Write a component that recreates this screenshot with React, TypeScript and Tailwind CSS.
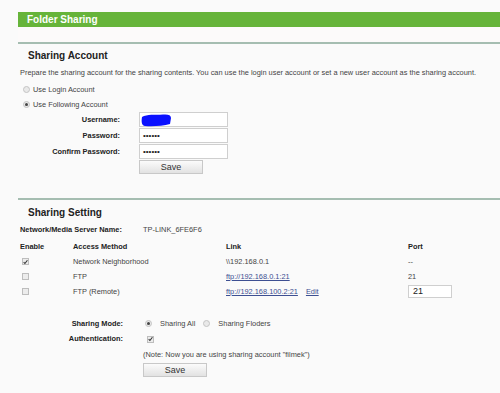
import React from 'react';

function Radio({ checked }: { checked?: boolean }) {
  return (
    <span className="w-[7px] h-[7px] rounded-full border border-[#c4c4c4] bg-[#e9e9e9] flex items-center justify-center shrink-0">
      {checked && <span className="w-[3px] h-[3px] rounded-full bg-[#444]" />}
    </span>
  );
}

function Check({ checked }: { checked?: boolean }) {
  return (
    <span className="w-[7px] h-[7px] border border-[#bdbdbd] bg-[#ececec] flex items-center justify-center shrink-0">
      {checked && (
        <svg width="6" height="6" viewBox="0 0 6 6">
          <path d="M0.8 3.2 L2.3 4.8 L5.3 0.9" stroke="#333" strokeWidth="1.3" fill="none" />
        </svg>
      )}
    </span>
  );
}

function SaveButton() {
  return (
    <button className="w-[64px] h-[14px] border border-[#c8c8c8] bg-gradient-to-b from-[#fbfbfb] to-[#e2e2e2] text-[9px] leading-[12px] text-[#333]">
      Save
    </button>
  );
}

function Field({ label, children }: { label: string; children: React.ReactNode }) {
  return (
    <div className="flex h-[15px] items-center">
      <div className="w-[120px] text-right font-bold text-[#222]">{label}</div>
      <div className="ml-[19px] relative w-[89px] h-[15px] border border-[#cfcfcf] bg-white flex items-center pl-[3px]">
        {children}
      </div>
    </div>
  );
}

export default function App() {
  return (
    <div className="w-[500px] h-[393px] overflow-hidden bg-[#fafafa] pt-[12px] text-[7.4px] leading-none text-[#444]" style={{ fontFamily: '"Liberation Sans", Arial, sans-serif' }}>
      {/* Header bar */}
      <div className="ml-[18px] h-[15px] bg-[#66b43a] pl-[9px] flex items-center text-[10px] font-bold text-white">
        Folder Sharing
      </div>
      <div className="ml-[18px] h-[17px] bg-[#fcfafa] border-b-2 border-[#a5bdb1]" />

      {/* Sharing Account */}
      <div className="mt-[5px] h-[14px] pl-[28px] flex items-center text-[10px] font-bold text-[#222]">Sharing Account</div>
      <div className="mt-[4px] h-[12px] pl-[20px] flex items-center">
        Prepare the sharing account for the sharing contents. You can use the login user account or set a new user account as the sharing account.
      </div>
      <div className="mt-[3px] h-[15px] pl-[23px] flex items-center gap-[3px]">
        <Radio />
        <span>Use Login Account</span>
      </div>
      <div className="h-[15px] pl-[23px] flex items-center gap-[3px]">
        <Radio checked />
        <span>Use Following Account</span>
      </div>
      <div className="flex flex-col gap-[1px]">
        <Field label="Username:">
          <svg className="absolute left-[1px] top-[1px]" width="31" height="13" viewBox="0 0 31 13">
            <path d="M1 3 C6 0 14 1 22 0.5 C27 0 30 1 30 4 L29 10 C22 12 12 12.5 4 12 C1 11.5 0 9 1 3 Z" fill="#0a10ff" />
          </svg>
        </Field>
        <Field label="Password:">
          <span className="text-[8px] text-[#222]">••••••</span>
        </Field>
        <Field label="Confirm Password:">
          <span className="text-[8px] text-[#222]">••••••</span>
        </Field>
      </div>
      <div className="mt-[1px] pl-[139px] flex">
        <SaveButton />
      </div>

      {/* Sharing Setting */}
      <div className="mt-[24px] ml-[18px] border-t-2 border-[#a5bdb1]" />
      <div className="mt-[6px] h-[14px] pl-[28px] flex items-center text-[10px] font-bold text-[#222]">Sharing Setting</div>
      <div className="mt-[4px] h-[12px] pl-[20px] flex items-center">
        <span className="w-[123px] font-bold text-[#222]">Network/Media Server Name:</span>
        <span>TP-LINK_6FE6F6</span>
      </div>
      <div className="mt-[3px] pl-[20px] grid grid-cols-[53px_153px_182px_auto] auto-rows-[15px] items-center">
        <span className="font-bold text-[#222]">Enable</span>
        <span className="font-bold text-[#222]">Access Method</span>
        <span className="font-bold text-[#222]">Link</span>
        <span className="font-bold text-[#222]">Port</span>

        <span className="pl-[2px]"><Check checked /></span>
        <span>Network Neighborhood</span>
        <span>\\192.168.0.1</span>
        <span>--</span>

        <span className="pl-[2px]"><Check /></span>
        <span>FTP</span>
        <span className="underline text-[#3d4f92]">ftp://192.168.0.1:21</span>
        <span>21</span>

        <span className="pl-[2px]"><Check /></span>
        <span>FTP (Remote)</span>
        <span className="flex gap-[8px]">
          <span className="underline text-[#3d4f92]">ftp://192.168.100.2:21</span>
          <span className="underline text-[#3d4f92]">Edit</span>
        </span>
        <span className="w-[44px] h-[13px] border border-[#cfcfcf] bg-white pl-[4px] flex items-center text-[9px] text-[#222]">21</span>
      </div>

      <div className="mt-[17px] grid grid-cols-[123px_auto] gap-x-[20px]">
        <span className="h-[15px] flex items-center justify-end font-bold text-[#222]">Sharing Mode:</span>
        <span className="h-[15px] flex items-center pl-[2px]">
          <Radio checked />
          <span className="ml-[8px]">Sharing All</span>
          <span className="ml-[8px]"><Radio /></span>
          <span className="ml-[8px]">Sharing Floders</span>
        </span>
        <span className="h-[16px] flex items-center justify-end font-bold text-[#222]">Authentication:</span>
        <span className="h-[16px] flex items-center pl-[4px]"><Check checked /></span>
        <span />
        <span className="h-[15px] flex items-center">(Note: Now you are using sharing account "filmek")</span>
        <span />
        <span className="mt-[1px] flex"><SaveButton /></span>
      </div>
    </div>
  );
}
